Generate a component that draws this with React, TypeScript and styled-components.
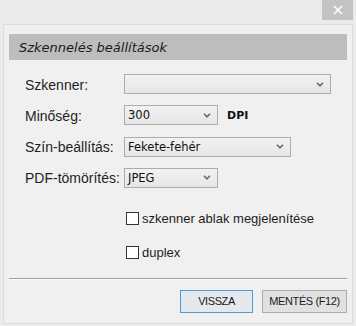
import * as React from "react";
import styled, { createGlobalStyle } from "styled-components";

const GlobalStyle = createGlobalStyle`
  html, body {
    margin: 0;
    padding: 0;
    background: #ebebeb;
    width: 356px;
    height: 326px;
    overflow: hidden;
  }
  * { box-sizing: border-box; }
`;

const TitleBar = styled.div`
  height: 24px;
  display: flex;
  justify-content: flex-end;
  padding-right: 3px;
`;

const CloseButton = styled.div`
  width: 31px;
  height: 20px;
  background: #c3c3c3;
  display: flex;
  align-items: center;
  justify-content: center;
`;

const Panel = styled.div`
  margin: 0 3px 0 3px;
  height: 300px;
  border: 1px solid #dddddd;
  background: #f0f0f0;
  padding: 9px 5px 0 5px;
`;

const Header = styled.div`
  height: 26px;
  background: #bdbdbd;
  display: flex;
  align-items: center;
  padding-left: 10px;
  font-family: "DejaVu Sans", Verdana, sans-serif;
  font-style: italic;
  font-size: 13px;
  color: #1a1a1a;
`;

const Form = styled.div`
  display: grid;
  grid-template-columns: 99px 1fr;
  grid-auto-rows: 20px;
  row-gap: 11.3px;
  margin-top: 14px;
  padding-left: 16px;
`;

const Label = styled.div`
  display: flex;
  align-items: center;
  font-family: "Liberation Sans", Arial, sans-serif;
  font-size: 14px;
  color: #1e1e1e;
  padding-top: 1px;
`;

const Field = styled.div`
  display: flex;
  align-items: center;
  gap: 9px;
`;

const SelectBox = styled.div<{ $w: number }>`
  width: ${(p) => p.$w}px;
  height: 20px;
  border: 1px solid #acacac;
  background: linear-gradient(#f2f2f2, #e6e6e6);
  display: flex;
  align-items: center;
  justify-content: space-between;
  padding: 0 6px 0 3px;
  font-family: "DejaVu Sans", Verdana, sans-serif;
  font-size: 11.5px;
  color: #111;
`;

const Unit = styled.span`
  font-family: "DejaVu Sans", Verdana, sans-serif;
  font-weight: bold;
  font-size: 11px;
  color: #111;
`;

const Checks = styled.div`
  display: flex;
  flex-direction: column;
  gap: 16px;
  margin-top: 22px;
  padding-left: 117px;
`;

const CheckRow = styled.label`
  display: flex;
  align-items: center;
  gap: 3px;
  height: 18px;
  font-family: "Liberation Sans", Arial, sans-serif;
  font-size: 13px;
  color: #1e1e1e;
`;

const Box = styled.span`
  width: 13px;
  height: 13px;
  border: 1px solid #333;
  background: #fff;
`;

const Separator = styled.div`
  margin-top: 16px;
  height: 2px;
  border-top: 1px solid #a0a0a0;
  border-bottom: 1px solid #fafafa;
`;

const Buttons = styled.div`
  display: flex;
  justify-content: flex-end;
  gap: 9px;
  margin-top: 10px;
`;

const Button = styled.button<{ $focus?: boolean; $w: number }>`
  width: ${(p) => p.$w}px;
  height: 23px;
  border: 1px solid ${(p) => (p.$focus ? "#4f9bd9" : "#adadad")};
  background: ${(p) => (p.$focus ? "#e5e8ec" : "#e1e1e1")};
  font-family: "Liberation Sans", Arial, sans-serif;
  font-size: 11px;
  letter-spacing: -0.4px;
  color: #1a1a1a;
  padding: 0;
`;

const Chevron = () => (
  <svg width="8" height="5" viewBox="0 0 8 5">
    <path d="M1 0.8 L4 3.8 L7 0.8" fill="none" stroke="#6a6a6a" strokeWidth="1.6" />
  </svg>
);

const Select = ({ value, w }: { value: string; w: number }) => (
  <SelectBox $w={w}>
    <span>{value}</span>
    <Chevron />
  </SelectBox>
);

export default function App() {
  return (
    <>
      <GlobalStyle />
      <TitleBar>
        <CloseButton>
          <svg width="10" height="10" viewBox="0 0 10 10">
            <path d="M1 1 L9 9 M9 1 L1 9" stroke="#fff" strokeWidth="1.6" />
          </svg>
        </CloseButton>
      </TitleBar>
      <Panel>
        <Header>Szkennelés beállítások</Header>
        <Form>
          <Label>Szkenner:</Label>
          <Field>
            <Select value="" w={207} />
          </Field>
          <Label>Minőség:</Label>
          <Field>
            <Select value="300" w={94} />
            <Unit>DPI</Unit>
          </Field>
          <Label>Szín-beállítás:</Label>
          <Field>
            <Select value="Fekete-fehér" w={167} />
          </Field>
          <Label>PDF-tömörítés:</Label>
          <Field>
            <Select value="JPEG" w={94} />
          </Field>
        </Form>
        <Checks>
          <CheckRow>
            <Box />
            szkenner ablak megjelenítése
          </CheckRow>
          <CheckRow>
            <Box />
            duplex
          </CheckRow>
        </Checks>
        <Separator />
        <Buttons>
          <Button $focus $w={73}>VISSZA</Button>
          <Button $w={85}>MENTÉS (F12)</Button>
        </Buttons>
      </Panel>
    </>
  );
}
